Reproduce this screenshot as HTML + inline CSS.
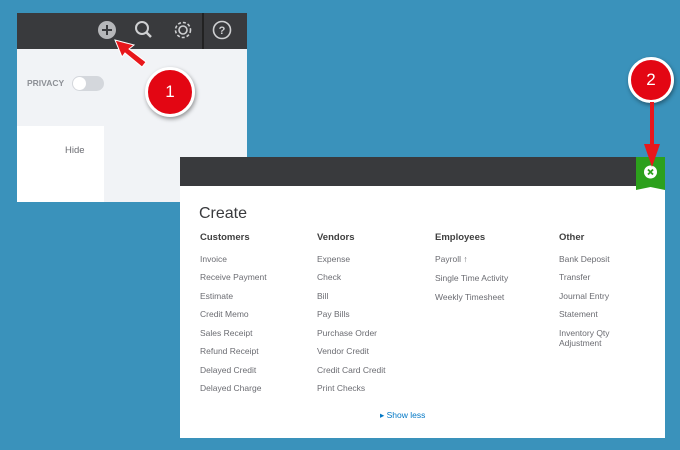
<!DOCTYPE html><html><head><style>
*{margin:0;padding:0}
body{width:680px;height:450px;background:#3a92bb;position:relative;overflow:hidden;font-family:"Liberation Sans",sans-serif}
.a{position:absolute}
.it{position:absolute;font-size:8.5px;color:#6b6c72;white-space:nowrap;line-height:10px}
.h{position:absolute;font-size:9.5px;font-weight:bold;color:#404040;line-height:10px}
</style></head><body>
<div class="a" style="left:17px;top:13px;width:230px;height:189px;background:#f1f3f6"></div>
<div class="a" style="left:17px;top:13px;width:230px;height:36px;background:#393a3d"></div>
<div class="a" style="left:202px;top:13px;width:2px;height:36px;background:#222"></div>
<svg class="a" style="left:96px;top:19px" width="150" height="24">
<circle cx="11" cy="11" r="9" fill="#b6b7ba"/><path d="M6 11h10M11 6v10" stroke="#393a3d" stroke-width="2"/>
<circle cx="46" cy="9" r="6" fill="none" stroke="#cfd0d2" stroke-width="2"/><path d="M50 13l5 5" stroke="#cfd0d2" stroke-width="2.5"/>
<circle cx="87" cy="11" r="4" fill="none" stroke="#cfd0d2" stroke-width="1.6"/><circle cx="87" cy="11" r="7.5" fill="none" stroke="#cfd0d2" stroke-width="1.6" stroke-dasharray="3 2"/>
<circle cx="126" cy="11" r="8.5" fill="none" stroke="#cfd0d2" stroke-width="1.6"/><text x="126" y="15" font-size="11" font-weight="bold" fill="#cfd0d2" text-anchor="middle" font-family="Liberation Sans">?</text>
</svg>
<div class="a" style="left:27px;top:78px;font-size:8.5px;font-weight:bold;color:#8d9096">PRIVACY</div>
<div class="a" style="left:72px;top:76px;width:32px;height:15px;border-radius:8px;background:#d4d7dc"></div>
<div class="a" style="left:73px;top:77px;width:13px;height:13px;border-radius:7px;background:#fff"></div>
<div class="a" style="left:17px;top:126px;width:87px;height:76px;background:#fff"></div>
<div class="a" style="left:65px;top:145px;font-size:9.5px;color:#6b6c72">Hide</div>
<svg class="a" style="left:110px;top:35px" width="50" height="40"><path d="M5 5L24 10 19 14 36 27 32 32 15 18 12 22Z" fill="#e8171b" stroke="#fff" stroke-width="1"/></svg>
<div class="a" style="left:145px;top:67px;width:44px;height:44px;border-radius:50%;background:#e30613;border:3px solid #fff;box-shadow:1px 2px 4px rgba(0,0,0,.4);color:#fff;font-size:17px;text-align:center;line-height:44px">1</div>
<div class="a" style="left:180px;top:157px;width:485px;height:281px;background:#fff"></div>
<div class="a" style="left:180px;top:157px;width:485px;height:29px;background:#393a3d"></div>
<svg class="a" style="left:636px;top:157px" width="29" height="34"><path d="M0 0H29V33L14.5 30 0 33Z" fill="#2ca01c"/><circle cx="14.5" cy="15" r="6.5" fill="#fff"/><path d="M12 12.5l5 5M17 12.5l-5 5" stroke="#2ca01c" stroke-width="1.8"/></svg>
<div class="a" style="left:628px;top:57px;width:40px;height:40px;border-radius:50%;background:#e30613;border:3px solid #fff;box-shadow:1px 2px 4px rgba(0,0,0,.4);color:#fff;font-size:17px;text-align:center;line-height:40px">2</div>
<svg class="a" style="left:640px;top:102px" width="24" height="68"><path d="M10 0h4v42h6L12 65 4 42h6Z" fill="#e8171b"/></svg>
<div class="a" style="left:199px;top:205px;font-size:16px;color:#393a3d">Create</div>
<div class="h" style="left:200px;top:233px">Customers</div>
<div class="h" style="left:317px;top:233px">Vendors</div>
<div class="h" style="left:435px;top:233px">Employees</div>
<div class="h" style="left:559px;top:233px">Other</div>
<div class="it" style="left:200px;top:254px">Invoice</div>
<div class="it" style="left:200px;top:272px">Receive Payment</div>
<div class="it" style="left:200px;top:291px">Estimate</div>
<div class="it" style="left:200px;top:309px">Credit Memo</div>
<div class="it" style="left:200px;top:328px">Sales Receipt</div>
<div class="it" style="left:200px;top:346px">Refund Receipt</div>
<div class="it" style="left:200px;top:365px">Delayed Credit</div>
<div class="it" style="left:200px;top:383px">Delayed Charge</div>
<div class="it" style="left:317px;top:254px">Expense</div>
<div class="it" style="left:317px;top:272px">Check</div>
<div class="it" style="left:317px;top:291px">Bill</div>
<div class="it" style="left:317px;top:309px">Pay Bills</div>
<div class="it" style="left:317px;top:328px">Purchase Order</div>
<div class="it" style="left:317px;top:346px">Vendor Credit</div>
<div class="it" style="left:317px;top:365px">Credit Card Credit</div>
<div class="it" style="left:317px;top:383px">Print Checks</div>
<div class="it" style="left:435px;top:254px">Payroll &#x2191;</div>
<div class="it" style="left:435px;top:273px">Single Time Activity</div>
<div class="it" style="left:435px;top:292px">Weekly Timesheet</div>
<div class="it" style="left:559px;top:254px">Bank Deposit</div>
<div class="it" style="left:559px;top:272px">Transfer</div>
<div class="it" style="left:559px;top:291px">Journal Entry</div>
<div class="it" style="left:559px;top:309px">Statement</div>
<div class="it" style="left:559px;top:328px">Inventory Qty<br>Adjustment</div>
<div class="it" style="left:380px;top:410px;color:#0077c5">&#9656; Show less</div>
</body></html>
